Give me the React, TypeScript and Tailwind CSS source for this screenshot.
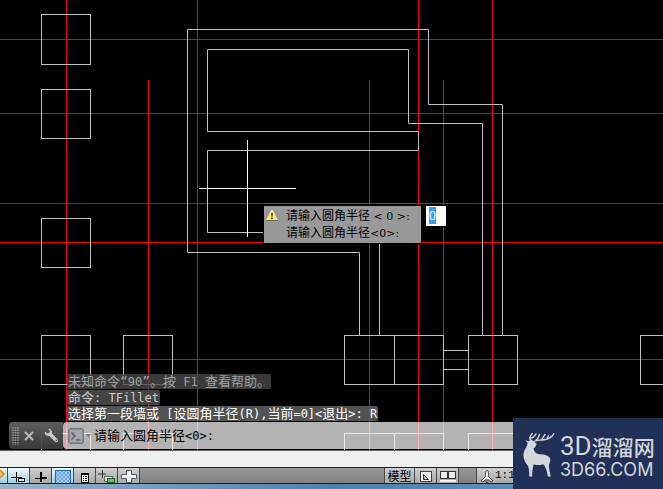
import React, { useState } from 'react';
import clsx from 'clsx';

interface MixedTextProps {
  text: string;
  latinClass: string;
}

// Latin runs are set one size smaller than the Chinese around them
const MixedText: React.FC<MixedTextProps> = ({ text, latinClass }) => (
  <>
    {text.split(/([\x20-\x7e]+)/).map((part, i) =>
      i % 2 ? (
        <span key={i} className={latinClass}>
          {part}
        </span>
      ) : (
        part
      ),
    )}
  </>
);

const horizontalAxes = [39, 113, 203, 242, 359];

const verticalAxes = [
  { x: 66, from: 0 },
  { x: 148, from: 80 },
  { x: 197, from: 0 },
  { x: 369, from: 80 },
  { x: 418, from: 0 },
  { x: 443, from: 80 },
  { x: 492, from: 0 },
];

const columns = [
  { x: 41, y: 14, h: 50 },
  { x: 41, y: 89, h: 49 },
  { x: 41, y: 218, h: 49 },
  { x: 41, y: 335, h: 49 },
  { x: 123, y: 335, h: 49 },
  { x: 344, y: 335, h: 49, w: 50 },
  { x: 394, y: 335, h: 49 },
  { x: 468, y: 335, h: 49 },
  { x: 640, y: 335, h: 49 },
  { x: 41, y: 433, h: 49 },
  { x: 123, y: 433, h: 49 },
  { x: 344, y: 433, h: 49, w: 50 },
  { x: 394, y: 433, h: 49 },
  { x: 468, y: 433, h: 49 },
];

const Drawing: React.FC = () => (
  <svg className="absolute inset-0 h-full w-full" aria-hidden="true">
    <g transform="translate(0.5 0.5)" fill="none">
      <g stroke="#f80000">
        {horizontalAxes.map((y) => (
          <line key={y} x1="-1" x2="100%" y1={y} y2={y} />
        ))}
        {verticalAxes.map(({ x, from }) => (
          <line key={x} x1={x} x2={x} y1={from - 0.5} y2="100%" />
        ))}
      </g>
      <g stroke="#c0c0c0">
        {columns.map(({ x, y, h, w = 49 }) => (
          <rect key={`${x}-${y}`} x={x} y={y} width={w} height={h} />
        ))}
        <path d="M359 335V252H187V29H428V104H502V335" />
        <path d="M482 335V123H408V49H207V131H418V150H207V232H379V335" />
        <path d="M443 350H468M443 369H468" />
      </g>
      <path d="M198.5 188H295.5M247 139.5V236.5" stroke="#fff" />
    </g>
  </svg>
);

const WarningIcon: React.FC = () => (
  <svg className="mt-[3px] h-3 w-3" viewBox="0 0 12 12" aria-hidden="true">
    <path d="M6 .8 11.3 11H.7Z" fill="#ffee58" stroke="#fff8c0" strokeLinejoin="round" />
    <path d="M.4 11.5H11.8" stroke="#686848" />
    <path d="M6 4V7.6M6 8.6V10" stroke="#303030" strokeWidth="1.4" />
  </svg>
);

const DynamicPrompt: React.FC = () => {
  const [radius, setRadius] = useState('0');

  return (
    <div className="absolute left-[263px] top-[205px] flex items-start gap-[3px] text-xs">
      <label
        htmlFor="radius"
        className="flex h-[39px] w-[159px] gap-2 border border-black bg-[#999] pl-0.5 font-['DejaVu_Sans','Noto_Sans_CJK_SC',sans-serif] text-black"
      >
        <WarningIcon />
        <span className="block whitespace-nowrap pt-0.5 leading-[17px]">
          <span className="block">
            <MixedText text="请输入圆角半径 < 0 >:" latinClass="text-[11px]" />
          </span>
          <span className="block">
            <MixedText text="请输入圆角半径<0>:" latinClass="text-[11px]" />
          </span>
        </span>
      </label>
      <div className="h-[22px] w-[22px] border border-black bg-white pl-[3px] pt-px">
        <input
          id="radius"
          value={radius}
          onChange={(e) => setRadius(e.target.value)}
          className="block h-[17px] w-[7px] bg-[#3399ff] font-['Open_Sans',sans-serif] text-xs leading-[17px] text-white outline-none"
        />
      </div>
    </div>
  );
};

const history = [
  { text: '未知命令“90”。按 F1 查看帮助。', style: 'bg-[#484848]/80 text-[#a0a0a0]' },
  { text: '命令: TFillet', style: 'bg-[#505050]/85 text-[#ccc]' },
  { text: '选择第一段墙或 [设圆角半径(R),当前=0]<退出>: R', style: 'bg-[#5c5c5c]/90 text-white' },
];

const CommandLine: React.FC = () => {
  const [command, setCommand] = useState('');

  return (
    <div className="absolute bottom-0 left-[9px] right-0 whitespace-pre font-['DejaVu_Sans_Mono','Noto_Sans_CJK_SC',monospace] text-[13px]">
      <ul className="ml-[58px]">
        {history.map(({ text, style }) => (
          <li key={text} className={clsx('mb-px h-[15px] w-fit rounded-[2px] px-px leading-[15px]', style)}>
            <MixedText text={text} latinClass="text-xs leading-none" />
          </li>
        ))}
      </ul>
      <div className="mb-px flex h-[27px] overflow-hidden rounded-l-sm">
        <div className="flex w-[54px] items-center bg-linear-to-b from-[#646464]/95 to-[#3c3c3c]/95">
          <svg className="ml-[3px] h-[18px] w-[7px]" viewBox="0 0 7 18" aria-hidden="true">
            <path d="M1 0V18M3.5 0V18M6 0V18" stroke="#999" strokeWidth="1.4" strokeDasharray="1.5 1" />
          </svg>
          <button type="button" aria-label="关闭" className="ml-[5px]">
            <svg className="h-2.5 w-2.5" viewBox="0 0 10 10">
              <path d="M1 1 9 9M9 1 1 9" stroke="#b8b8b8" strokeWidth="2" />
            </svg>
          </button>
          <button type="button" aria-label="自定义" className="ml-2.5">
            <svg className="h-[15px] w-[15px]" viewBox="0 0 15 15">
              <path
                d="M3.8.7 5.9 2.8 5.4 4.8 3.3 5.3.8 3.5C.3 6.3 2.5 8.6 5.3 8L11 13.7C12.8 15.2 15.1 13 13.6 11.2L8 5.5C8.7 2.6 6.5.2 3.8.7Z"
                fill="#c8c8c8"
              />
              <circle cx="12.3" cy="12.4" r=".8" fill="#555" />
            </svg>
          </button>
        </div>
        <div className="flex flex-1 items-center rounded-l-sm bg-white/70 pl-[5px]">
          <button type="button" aria-label="最近使用的命令" className="flex items-center">
            <svg className="h-4 w-4" viewBox="0 0 16 16">
              <rect x=".8" y=".8" width="14.4" height="14.4" rx="2" fill="#a4a8ac" stroke="#70767c" strokeWidth="1.4" />
              <path d="M3.5 4.5 7 8 3.5 11.5M8 11.8H12.5" fill="none" stroke="#4c545c" strokeWidth="1.3" />
            </svg>
            <svg className="ml-0.5 h-1 w-[5px]" viewBox="0 0 5 4">
              <path d="M0 0H5L2.5 3.5Z" fill="#777" />
            </svg>
          </button>
          <label htmlFor="command" className="ml-[3px] leading-4 text-black">
            <MixedText text="请输入圆角半径<0>:" latinClass="text-xs" />
          </label>
          <input
            id="command"
            value={command}
            onChange={(e) => setCommand(e.target.value)}
            className="ml-1 min-w-0 flex-1 bg-transparent text-xs text-black outline-none"
          />
        </div>
      </div>
    </div>
  );
};

interface StatusButtonProps {
  label: string;
  active?: boolean;
  width?: string;
  children: React.ReactNode;
}

const StatusButton: React.FC<StatusButtonProps> = ({ label, active, width = 'w-[22px]', children }) => (
  <button
    type="button"
    aria-label={label}
    aria-pressed={active}
    className={clsx(
      'flex h-full shrink-0 items-center justify-center border-r border-[#484848] bg-linear-to-b',
      width,
      active ? 'from-[#eefafc] to-[#9cd0de]' : 'from-[#cfcfcf] to-[#a8a8a8]',
    )}
  >
    {children}
  </button>
);

const StatusBar: React.FC = () => (
  <div className="flex h-[17px] border-y border-[#202020] bg-linear-to-b from-[#989898] to-[#808080]">
    <StatusButton label="对象捕捉追踪" active width="w-2">
      <svg className="h-[15px] w-[7px]" viewBox="0 0 7 15">
        <path d="M0 2 4 6 0 10" fill="#ffc860" stroke="#e07810" strokeWidth="1.4" />
      </svg>
    </StatusButton>
    <StatusButton label="动态输入" active>
      <svg className="h-[15px] w-4" viewBox="0 0 16 15">
        <path d="M5.5 4V14M0 9.5H11" stroke="#000" />
        <rect x="7.5" y="10.5" width="6" height="3" fill="#e8f4f8" stroke="#000" />
      </svg>
    </StatusButton>
    <StatusButton label="线宽">
      <svg className="h-[15px] w-4" viewBox="0 0 16 15">
        <path d="M8 4V14" stroke="#000" strokeWidth="2" />
        <path d="M2 10.5H8" stroke="#000" />
        <path d="M7 10H14" stroke="#000" strokeWidth="2" />
      </svg>
    </StatusButton>
    <StatusButton label="透明度" active>
      <svg className="h-[15px] w-4" viewBox="0 0 16 15" shapeRendering="crispEdges">
        <defs>
          <pattern id="checks" width="4" height="4" patternUnits="userSpaceOnUse">
            <rect width="4" height="4" fill="#a8d0f0" />
            <path d="M0 0H2V2H0ZM2 2H4V4H2Z" fill="#68a4dc" />
          </pattern>
        </defs>
        <rect x=".5" y="2.5" width="15" height="13" fill="url(#checks)" stroke="#1c64bc" />
      </svg>
    </StatusButton>
    <StatusButton label="快捷特性">
      <svg className="h-[15px] w-4" viewBox="0 0 16 15" shapeRendering="crispEdges">
        <rect x="4.5" y="5.5" width="7" height="9" fill="#fff" stroke="#000" />
        <path d="M4 6H12" stroke="#000" strokeWidth="2" />
        <path d="M6 8.5H10M6 10.5H10M6 12.5H10" stroke="#000" strokeDasharray="1 1 2 1" />
      </svg>
    </StatusButton>
    <StatusButton label="选择循环">
      <svg className="h-[15px] w-[18px]" viewBox="0 0 18 15">
        <path d="M4.5 2V10M0 6H8" stroke="#303030" />
        <rect x="6.5" y="8.5" width="8" height="5" fill="#e8e8e8" stroke="#666" />
        <rect x="9.5" y="10.5" width="7" height="4" fill="#78b868" stroke="#18601c" />
      </svg>
    </StatusButton>
    <StatusButton label="注释监视器">
      <svg className="h-[15px] w-4" viewBox="0 0 16 15">
        <path d="M5.5 2.5H10.5V6.5H15.5V10.5H10.5V14.5H5.5V10.5H.5V6.5H5.5Z" fill="#eef2f4" stroke="#505860" />
      </svg>
    </StatusButton>
    <div className="w-[245px] border-r border-[#484848]" />
    <StatusButton label="模型" width="w-[30px]">
      <span className="font-['Noto_Sans_CJK_SC',sans-serif] text-xs leading-[15px] text-black">模型</span>
    </StatusButton>
    <StatusButton label="快速查看布局">
      <svg className="h-[15px] w-4" viewBox="0 0 16 15">
        <rect x="2.5" y="3.5" width="11" height="10" fill="#f4f4f4" stroke="#404040" />
        <path d="M5.5 6.5V11.5H10.5Z" fill="#b0b0b0" stroke="#303030" />
      </svg>
    </StatusButton>
    <StatusButton label="快速查看图形">
      <svg className="h-[15px] w-[18px]" viewBox="0 0 18 15">
        <rect x="1.5" y="3.5" width="7" height="7" fill="#ececec" stroke="#303030" />
        <rect x="9.5" y="3.5" width="7" height="7" fill="#ececec" stroke="#303030" />
        <path d="M1 13H17" stroke="#f0f0f0" strokeWidth="2" />
      </svg>
    </StatusButton>
    <div className="w-[18px] shrink-0 border-r border-[#484848]" />
    <button
      type="button"
      className="flex min-w-[180px] flex-1 items-center gap-px bg-linear-to-b from-[#cfcfcf] to-[#a8a8a8] pl-[3px] font-['Liberation_Mono',monospace] text-[11px] leading-[15px] text-black"
    >
      <svg className="h-[15px] w-[14px] shrink-0" viewBox="0 0 14 15" aria-hidden="true">
        <path
          d="M7 2.5C8.5 2.5 8.6 5 8.4 8.6L12.8 12.6 11.4 14.2 7.8 11.4V14.5H6.2V11.4L2.6 14.2 1.2 12.6 5.6 8.6C5.4 5 5.5 2.5 7 2.5Z"
          fill="#f4f4f4"
          stroke="#404040"
        />
      </svg>
      1:1
    </button>
  </div>
);

const Badge: React.FC = () => (
  <div className="absolute bottom-0 right-0 flex h-[71px] w-[150px] bg-[#213056] pl-2.5 text-[#d4d6da]">
    <svg className="mt-[14px] h-[46px] w-8" viewBox="0 0 32 46" aria-hidden="true">
      <path
        d="M8 7.5 11 9.5 13.8 12 12 15.2 10.6 16.4C11 20 13 21.8 17 22.2 21 22.4 24.5 23 26.6 25.6 27.5 27 27.7 29 26.7 30.6 25.8 33 25.8 35.2 26.6 38.4L27.8 44.5H24.8L23.6 38.5C22.6 35.4 21.7 33.5 20 32.2 16.6 33.4 13.5 33.3 10.8 32.2 9.7 35.5 9.2 39 9.1 44.5H6.3C6.2 39.5 6 36.5 5 34 2.2 30.5 .5 27 .4 23.5 .3 19.5 2.5 16.5 3.8 14.2L4.6 10.8 2.2 8.2 5.8 9.2Z"
        fill="currentColor"
      />
      <path
        d="M8.5 9.5C5.8 7 6.5 4 9.3 1.5M8 6C10 6.6 11 4.5 13 2M10.5 10C13 7.5 17 8.5 21 7.7 25 7.2 28.5 5.5 30.8 1.8M13 8.2C15 7 15.8 5 16.5 2.5M18 8C19.8 6.5 20.5 4.5 22 2.5M24 6.7 25.5 3.8"
        fill="none"
        stroke="currentColor"
        strokeWidth="1.4"
        strokeLinecap="round"
      />
    </svg>
    <div className="ml-[5px] mt-4 whitespace-nowrap">
      <div className="flex h-6 items-center font-['Roboto',sans-serif] text-[26px] leading-6">
        3D
        <span className="font-['Noto_Sans_CJK_SC',sans-serif] text-[21px] font-medium leading-6">溜溜网</span>
      </div>
      <div className="mt-1 h-4 font-['Inter',sans-serif] text-lg leading-4">3D66.COM</div>
    </div>
  </div>
);

const App: React.FC = () => (
  <div className="relative flex h-screen flex-col overflow-hidden bg-black">
    <main className="relative min-h-0 flex-1 overflow-hidden">
      <Drawing />
      <DynamicPrompt />
      <CommandLine />
    </main>
    <div className="h-[17px] border-t border-[#606060] bg-[#efefef]" />
    <StatusBar />
    <div className="h-[5px] bg-linear-to-r from-[#9ab4c8] via-[#4c80b0] to-[#6c98bc]" />
    <Badge />
  </div>
);

export default App;
